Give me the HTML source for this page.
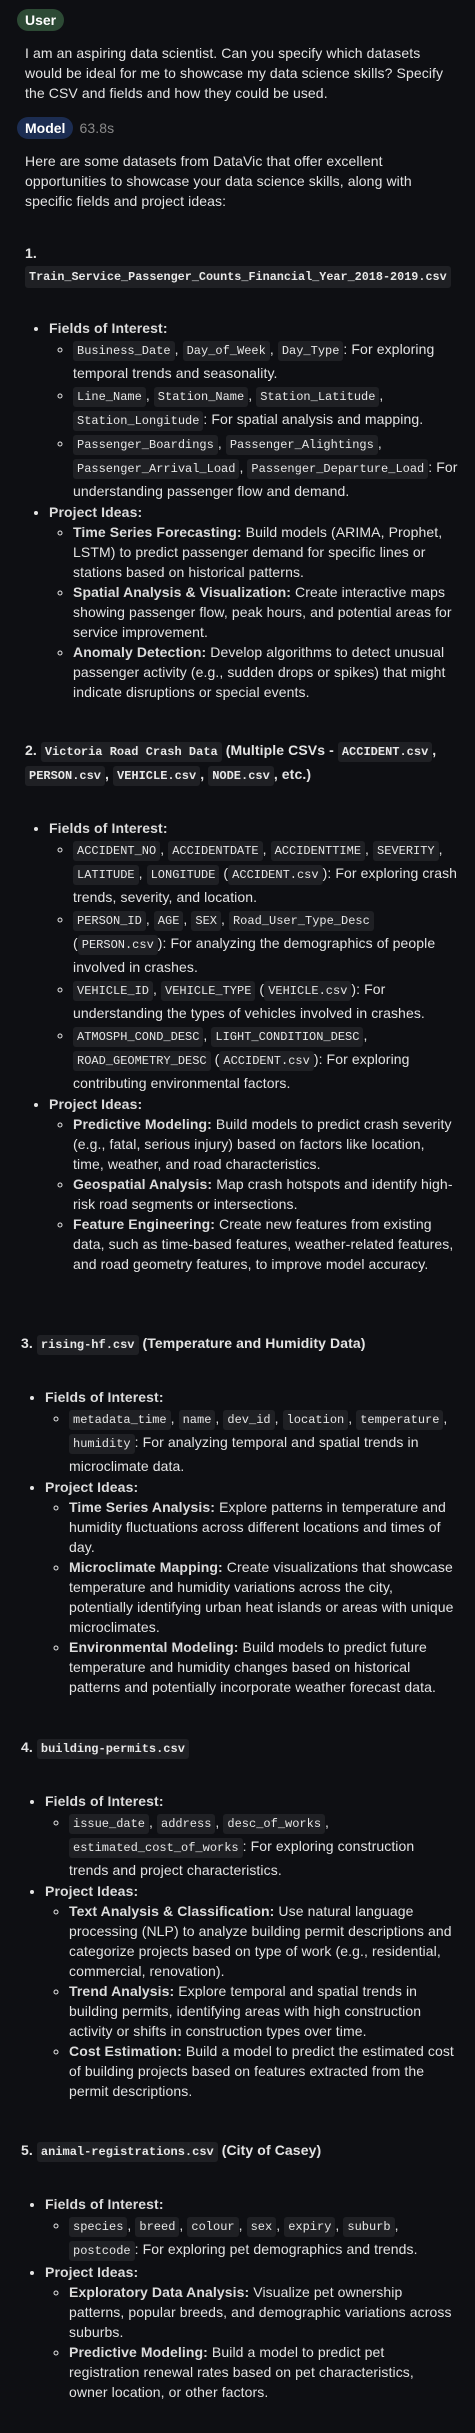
<!DOCTYPE html>
<html><head><meta charset="utf-8"><style>
html,body{margin:0;padding:0;background:#0e0f13;}
body{width:475px;height:2433px;overflow:hidden;font-family:"Liberation Sans",sans-serif;font-size:14px;line-height:20px;color:#e4e4e4;letter-spacing:0.1px;}
.badge{display:inline-block;height:22px;line-height:22px;padding:0 8px;border-radius:11px;font-weight:bold;font-size:14px;color:#fff;letter-spacing:0;}
.row{position:absolute;left:17px;}
code{font-family:"Liberation Mono",monospace;font-size:12px;background:#1f2024;padding:3px 4px;border-radius:3px;color:#e8e8e8;letter-spacing:0;}
.msg{position:absolute;left:25px;width:432px;}
.sec{position:absolute;width:434px;}
.h{font-weight:bold;line-height:22px;}
ul{margin:0;padding-left:24px;}
ul ul{padding-left:24px;list-style:circle;}
li{line-height:20px;}
li.c{line-height:22px;}
b{color:#dcdcdc;}
</style></head><body>
<div class="row" style="top:9px"><span class="badge" style="background:#2d4a35">User</span></div>
<div class="msg" style="top:43px;width:425px">I am an aspiring data scientist. Can you specify which datasets would be ideal for me to showcase my data science skills? Specify the CSV and fields and how they could be used.</div>
<div class="row" style="top:117px"><span class="badge" style="background:#1c2d52">Model</span> <span style="color:#8a8a8a;margin-left:2px">63.8s</span></div>
<div class="msg" style="top:151px;width:425px">Here are some datasets from DataVic that offer excellent opportunities to showcase your data science skills, along with specific fields and project ideas:</div>

<div class="sec" style="left:25px;top:242px">
<div class="h">1.</div>
<div class="h" style="white-space:nowrap"><code style="display:inline-block;padding:3px 4px;line-height:16px;font-size:11.8px">Train_Service_Passenger_Counts_Financial_Year_2018-2019.csv</code></div>
<ul style="margin-top:30px">
<li><b>Fields of Interest:</b>
<ul>
<li class="c"><code>Business_Date</code>, <code>Day_of_Week</code>, <code>Day_Type</code>: For exploring temporal trends and seasonality.</li>
<li class="c"><code>Line_Name</code>, <code>Station_Name</code>, <code>Station_Latitude</code>, <code>Station_Longitude</code>: For spatial analysis and mapping.</li>
<li class="c"><code>Passenger_Boardings</code>, <code>Passenger_Alightings</code>, <code>Passenger_Arrival_Load</code>, <code>Passenger_Departure_Load</code>: For understanding passenger flow and demand.</li>
</ul></li>
<li><b>Project Ideas:</b>
<ul>
<li><b>Time Series Forecasting:</b> Build models (ARIMA, Prophet, LSTM) to predict passenger demand for specific lines or stations based on historical patterns.</li>
<li><b>Spatial Analysis &amp; Visualization:</b> Create interactive maps showing passenger flow, peak hours, and potential areas for service improvement.</li>
<li><b>Anomaly Detection:</b> Develop algorithms to detect unusual passenger activity (e.g., sudden drops or spikes) that might indicate disruptions or special events.</li>
</ul></li>
</ul>
</div>

<div class="sec" style="left:25px;top:739px">
<div class="h"><b style="color:#e4e4e4">2.</b> <code>Victoria Road Crash Data</code> (Multiple CSVs - <code>ACCIDENT.csv</code>, <code>PERSON.csv</code>, <code>VEHICLE.csv</code>, <code>NODE.csv</code>, etc.)</div>
<ul style="margin-top:31px">
<li><b>Fields of Interest:</b>
<ul>
<li class="c"><code>ACCIDENT_NO</code>, <code>ACCIDENTDATE</code>, <code>ACCIDENTTIME</code>, <code>SEVERITY</code>, <code>LATITUDE</code>, <code>LONGITUDE</code> (<code>ACCIDENT.csv</code>): For exploring crash trends, severity, and location.</li>
<li class="c"><code>PERSON_ID</code>, <code>AGE</code>, <code>SEX</code>, <code>Road_User_Type_Desc</code> (<code>PERSON.csv</code>): For analyzing the demographics of people involved in crashes.</li>
<li class="c"><code>VEHICLE_ID</code>, <code>VEHICLE_TYPE</code> (<code>VEHICLE.csv</code>): For understanding the types of vehicles involved in crashes.</li>
<li class="c"><code>ATMOSPH_COND_DESC</code>, <code>LIGHT_CONDITION_DESC</code>, <code>ROAD_GEOMETRY_DESC</code> (<code>ACCIDENT.csv</code>): For exploring contributing environmental factors.</li>
</ul></li>
<li><b>Project Ideas:</b>
<ul>
<li><b>Predictive Modeling:</b> Build models to predict crash severity (e.g., fatal, serious injury) based on factors like location, time, weather, and road characteristics.</li>
<li><b>Geospatial Analysis:</b> Map crash hotspots and identify high-risk road segments or intersections.</li>
<li><b>Feature Engineering:</b> Create new features from existing data, such as time-based features, weather-related features, and road geometry features, to improve model accuracy.</li>
</ul></li>
</ul>
</div>

<div class="sec" style="left:21px;top:1332px">
<div class="h"><b style="color:#e4e4e4">3.</b> <code>rising-hf.csv</code> (Temperature and Humidity Data)</div>
<ul style="margin-top:31px">
<li><b>Fields of Interest:</b>
<ul>
<li class="c"><code>metadata_time</code>, <code>name</code>, <code>dev_id</code>, <code>location</code>, <code>temperature</code>, <code>humidity</code>: For analyzing temporal and spatial trends in microclimate data.</li>
</ul></li>
<li><b>Project Ideas:</b>
<ul>
<li><b>Time Series Analysis:</b> Explore patterns in temperature and humidity fluctuations across different locations and times of day.</li>
<li><b>Microclimate Mapping:</b> Create visualizations that showcase temperature and humidity variations across the city, potentially identifying urban heat islands or areas with unique microclimates.</li>
<li><b>Environmental Modeling:</b> Build models to predict future temperature and humidity changes based on historical patterns and potentially incorporate weather forecast data.</li>
</ul></li>
</ul>
</div>

<div class="sec" style="left:21px;top:1736px">
<div class="h"><b style="color:#e4e4e4">4.</b> <code>building-permits.csv</code></div>
<ul style="margin-top:31px">
<li><b>Fields of Interest:</b>
<ul>
<li class="c"><code>issue_date</code>, <code>address</code>, <code>desc_of_works</code>, <code>estimated_cost_of_works</code>: For exploring construction trends and project characteristics.</li>
</ul></li>
<li><b>Project Ideas:</b>
<ul>
<li><b>Text Analysis &amp; Classification:</b> Use natural language processing (NLP) to analyze building permit descriptions and categorize projects based on type of work (e.g., residential, commercial, renovation).</li>
<li><b>Trend Analysis:</b> Explore temporal and spatial trends in building permits, identifying areas with high construction activity or shifts in construction types over time.</li>
<li><b>Cost Estimation:</b> Build a model to predict the estimated cost of building projects based on features extracted from the permit descriptions.</li>
</ul></li>
</ul>
</div>

<div class="sec" style="left:21px;top:2139px">
<div class="h"><b style="color:#e4e4e4">5.</b> <code>animal-registrations.csv</code> (City of Casey)</div>
<ul style="margin-top:31px">
<li><b>Fields of Interest:</b>
<ul>
<li class="c"><code>species</code>, <code>breed</code>, <code>colour</code>, <code>sex</code>, <code>expiry</code>, <code>suburb</code>, <code>postcode</code>: For exploring pet demographics and trends.</li>
</ul></li>
<li><b>Project Ideas:</b>
<ul>
<li><b>Exploratory Data Analysis:</b> Visualize pet ownership patterns, popular breeds, and demographic variations across suburbs.</li>
<li><b>Predictive Modeling:</b> Build a model to predict pet registration renewal rates based on pet characteristics, owner location, or other factors.</li>
</ul></li>
</ul>
</div>
</body></html>
